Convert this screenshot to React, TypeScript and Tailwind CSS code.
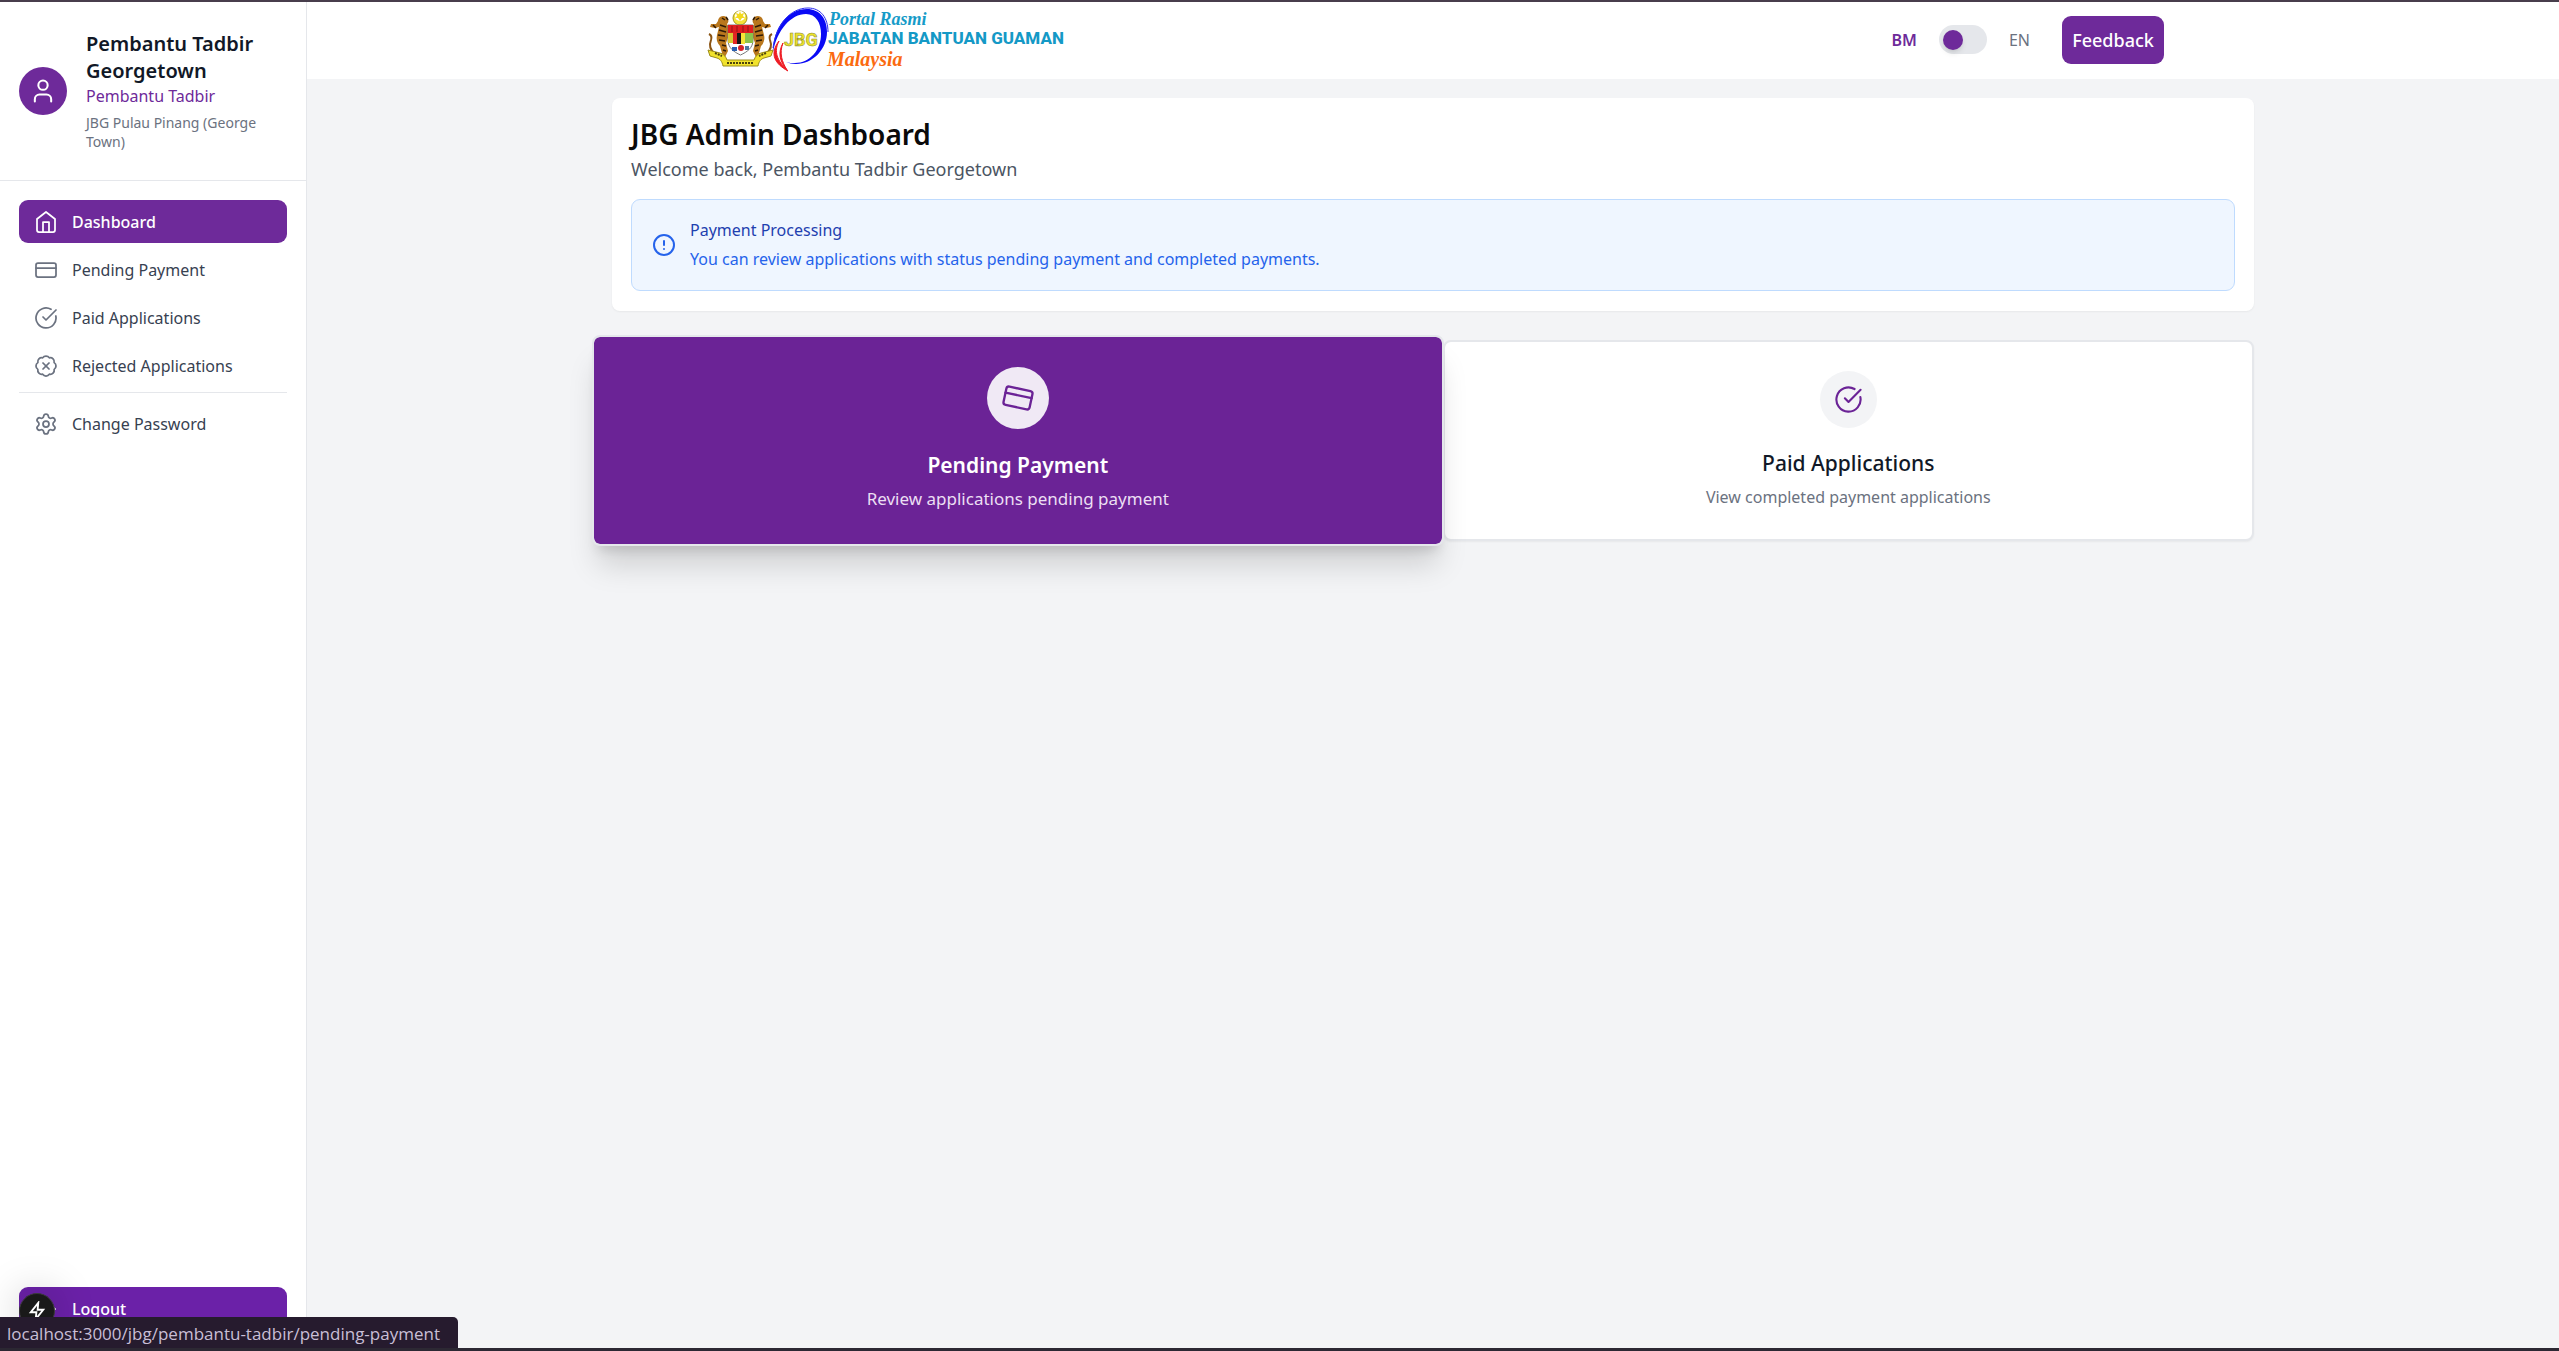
import {
  BadgeX,
  CircleAlert,
  CircleCheckBig,
  CreditCard,
  LogOut,
  Settings,
  User,
  type LucideIcon,
} from "lucide-react";
import { clsx } from "clsx";

interface NavItem {
  label: string;
  href: string;
  icon: LucideIcon | typeof HomeIcon;
  active?: boolean;
}

const NAV_ITEMS: NavItem[] = [
  { label: "Dashboard", href: "#dashboard", icon: HomeIcon, active: true },
  { label: "Pending Payment", href: "#pending-payment", icon: CreditCard },
  { label: "Paid Applications", href: "#paid", icon: CircleCheckBig },
  { label: "Rejected Applications", href: "#rejected", icon: BadgeX },
];

function HomeIcon({ className, strokeWidth = 2 }: { className?: string; strokeWidth?: number | string }) {
  return (
    <svg
      viewBox="0 0 24 24"
      fill="none"
      stroke="currentColor"
      strokeWidth={strokeWidth}
      strokeLinecap="round"
      strokeLinejoin="round"
      className={className}
    >
      <path d="m3 9 9-7 9 7v11a2 2 0 0 1-2 2H5a2 2 0 0 1-2-2z" />
      <path d="M9 22V12h6v10" />
    </svg>
  );
}

function Tiger() {
  return (
    <g>
      <path
        d="M13 4c3-2 7-1 8 2 1 2 0 4-1 5 2 3 3 7 2 11l-3 8 2 8-3 6-7 1 1-3 3-2-2-7c-3-3-4-7-3-11l2-8-4 1-5-1 1-3 5 0 2-3c0-2 1-3 2-4z"
        fill="#b9771d"
      />
      <path
        d="M15 5l3 2M13 12l6 2M12 17l7 2M11 22l7 1M12 27l6 1M15 32l4 1M16 37l3 1M6 12l3 3M19 4l2 3"
        stroke="#2d1a08"
        strokeWidth="1.5"
        fill="none"
      />
      <path d="M8 41c-5-4-6-9-4-14 1-3 0-5-2-6" stroke="#8a5312" strokeWidth="2" fill="none" />
    </g>
  );
}

function Crest() {
  return (
    <g>
      <circle cx="33" cy="9" r="7" fill="#f3e23a" stroke="#a5961c" strokeWidth="1" />
      <circle cx="33" cy="7" r="5" fill="#fff" />
      <path d="m33 2 1 3 3-1-1 3 2 2-3 0-2 3-2-3-3 0 2-2-1-3 3 1z" fill="#f3d91c" />
      <g transform="translate(67 4) scale(-1 1)">
        <Tiger />
      </g>
      <g transform="translate(0 4)">
        <Tiger />
      </g>
      <path d="M21 16h25v15c0 8-6 12-12.500 15C27 43 21 39 21 31z" fill="#fff" stroke="#777" strokeWidth="1" />
      <path d="M21 16h25v8H21z" fill="#df1e20" />
      <path d="M25 17v6M30 17v6M36 17v6M41 17v6" stroke="#8f1518" strokeWidth="1" />
      <path d="M21 24h5v10h-5z" fill="#d8c832" />
      <path d="M26 24h4v11h-4z" fill="#e12724" />
      <path d="M30 24h4v11h-4z" fill="#171717" />
      <path d="M34 24h4v11h-4z" fill="#f6e436" />
      <path d="M38 24h8v10h-8z" fill="#8bc34a" />
      <path d="M25 38h5v4h-5z" fill="#2b5fae" />
      <circle cx="34" cy="39" r="3" fill="#d5262a" />
      <path d="M38 37h4v4h-4z" fill="#4d7a9f" />
      <path
        d="M1 41l12 3c4 1 6 4 7 7h27c1-3 3-6 7-7l12-3-2 6-7 2c-3 1-5 3-6 8H16c-1-5-3-7-6-8l-7-2z"
        fill="#f1e22c"
        stroke="#9c8d1b"
        strokeWidth="1"
      />
      <path d="M20 54h27M8 44l7 3M59 44l-7 3" stroke="#4b430d" strokeWidth="2" strokeDasharray="2 1" />
    </g>
  );
}

function PortalLogo() {
  return (
    <svg viewBox="0 0 366 70" className="h-[70px] w-[366px]" role="img" aria-label="Jabatan Bantuan Guaman">
      <g transform="translate(5 4)">
        <Crest />
      </g>
      <path
        fillRule="evenodd"
        d="M71 47C71 22 86 4 105 4c12 0 20 9 20 23 0 17-14 32-31 32-4 0-7-1-10-2 3 1 6 1 9 1 15 0 26-13 26-29 0-11-5-20-15-20C89 9 75 25 71 47z"
        fill="#0a0af5"
      />
      <path d="M71 43C74 20 88 3 106 3c13 0 20 10 20 24" stroke="#2b2bf0" strokeWidth="1" fill="none" />
      <path d="M77 36c-4 8-5 17 9 30-13-7-19-17-9-30zM81 38c-4 10-1 19 4 27-8-9-9-18-4-27z" fill="#ee1c24" stroke="#ee1c24" />
      <text
        x="82"
        y="41"
        fontSize="18"
        fontWeight="700"
        fill="#ebe32a"
        stroke="#8c8a35"
        strokeWidth="0.5"
        className="font-['Roboto',sans-serif]"
      >
        JBG
      </text>
      <text
        x="127"
        y="20"
        fontSize="18"
        fontWeight="700"
        fontStyle="italic"
        fill="#169bc8"
        className="font-['Liberation_Serif',serif]"
      >
        Portal Rasmi
      </text>
      <text
        x="126"
        y="39"
        fontSize="17"
        fontWeight="800"
        fill="#1499c6"
        className="font-['Roboto',sans-serif]"
      >
        JABATAN BANTUAN GUAMAN
      </text>
      <text
        x="125"
        y="61"
        fontSize="20"
        fontWeight="700"
        fontStyle="italic"
        fill="#fb6a10"
        className="font-['Liberation_Serif',serif]"
      >
        Malaysia
      </text>
    </svg>
  );
}

function NavLink({ item }: { item: NavItem }) {
  const Icon = item.icon;
  return (
    <a
      href={item.href}
      className={clsx(
        "flex h-[43px] items-center gap-[14px] rounded-[9px] px-[15px] text-base",
        item.active ? "bg-[#6e2a9a] font-medium text-white" : "text-[#374151]",
      )}
    >
      <Icon strokeWidth={1.75} className={clsx("size-6 shrink-0", !item.active && "text-[#6b7280]")} />
      {item.label}
    </a>
  );
}

function Sidebar() {
  return (
    <aside className="flex w-[12%] shrink-0 flex-col border-r border-[#e5e7eb] bg-white">
      <div className="flex items-center gap-[19px] border-b border-[#e5e7eb] px-[19px] pt-7 pb-[29px]">
        <div className="flex size-12 shrink-0 items-center justify-center rounded-full bg-[#6e2a9a] text-white">
          <User strokeWidth={1.75} className="size-7" />
        </div>
        <div className="min-w-0">
          <h2 className="text-xl leading-[27px] font-semibold text-[#111827]">Pembantu Tadbir Georgetown</h2>
          <p className="text-base leading-[25px] text-[#6e2a9a]">Pembantu Tadbir</p>
          <p className="mt-1 text-sm leading-[19px] text-[#6b7280]">JBG Pulau Pinang (George Town)</p>
        </div>
      </div>

      <nav className="flex flex-1 flex-col gap-[5px] p-[19px]">
        {NAV_ITEMS.map((item) => (
          <NavLink key={item.label} item={item} />
        ))}
        <div className="border-t border-[#e5e7eb] pt-[9px]">
          <NavLink item={{ label: "Change Password", href: "#password", icon: Settings }} />
        </div>
      </nav>

      <div className="px-[19px] pb-[18px]">
        <button
          type="button"
          className="flex h-[43px] w-full items-center gap-[14px] rounded-[9px] bg-[#6b21a8] px-[15px] text-base font-medium text-white"
        >
          <LogOut strokeWidth={1.5} className="size-6" />
          Logout
        </button>
      </div>
    </aside>
  );
}

function Header() {
  return (
    <header className="bg-white">
      <div className="mx-auto flex h-[77px] max-w-[1462px] items-center justify-between pb-0.5">
        <a href="#home">
          <PortalLogo />
        </a>
        <div className="flex items-center">
          <label htmlFor="language" className="text-base font-semibold text-[#6e2a9a]">
            BM
          </label>
          <span className="relative mx-[22px] flex h-[29px] w-12">
            <input
              id="language"
              type="checkbox"
              role="switch"
              className="peer w-full cursor-pointer appearance-none rounded-full bg-[#e5e7eb]"
            />
            <span className="pointer-events-none absolute top-[5px] left-1 size-5 rounded-full bg-[#6e2a9a] shadow-md peer-checked:left-6" />
          </span>
          <label htmlFor="language" className="text-base text-[#6b7280]">
            EN
          </label>
          <button
            type="button"
            className="ml-8 h-12 w-[102px] rounded-[9px] bg-[#6e2a9a] text-lg font-medium text-white"
          >
            Feedback
          </button>
        </div>
      </div>
    </header>
  );
}

function StatusBar() {
  return (
    <>
      <div className="absolute bottom-[19px] left-[19px] flex size-9 items-center justify-center rounded-full border border-[#3a3a3a] bg-[#191919] text-white shadow-[0_0_40px_rgba(0,0,0,0.25)]">
        <svg viewBox="0 0 16 16" className="size-5" fill="none" stroke="currentColor" strokeWidth="1.5">
          <path d="M9 1.500 3 9h4.500L7 14.500 13 7H8.500z" />
        </svg>
      </div>
      <div className="absolute bottom-0 left-0 h-[31px] rounded-tr-[5px] bg-[#261b2e] pr-[18px] pl-[7px] font-['Open_Sans',sans-serif] text-[17px] leading-[33px] text-[#c9bfd6]">
        localhost:3000/jbg/pembantu-tadbir/pending-payment
      </div>
    </>
  );
}

export default function App() {
  return (
    <div className="relative flex min-h-screen border-t-2 border-b-3 border-t-[#483e4c] border-b-[#2c2833] bg-[#f3f4f6] font-['Noto_Sans',sans-serif]">
      <Sidebar />

      <div className="min-w-0 flex-1">
        <Header />

        <main className="mx-auto mt-[19px] max-w-[1642px]">
          <section className="rounded-lg bg-white px-[19px] pt-[19px] pb-5 shadow-xs">
            <h1 className="text-[28px] leading-[34px] font-semibold text-[#0a0a0a]">JBG Admin Dashboard</h1>
            <p className="mt-1 text-lg leading-7 text-[#4b5563]">Welcome back, Pembantu Tadbir Georgetown</p>
            <div className="mt-4 flex items-center gap-[14px] rounded-[9px] border border-[#bfdbfe] bg-[#eff6ff] px-5 py-4">
              <CircleAlert strokeWidth={2} className="size-6 shrink-0 text-[#2563eb]" />
              <div className="text-base leading-[29px]">
                <h3 className="text-[#1e40af]">Payment Processing</h3>
                <p className="text-[#2563eb]">
                  You can review applications with status pending payment and completed payments.
                </p>
              </div>
            </div>
          </section>

          <div className="mt-[29px] grid grid-cols-2 gap-[19px]">
            {/* Hovered card grows past its grid cell */}
            <a
              href="#pending-payment"
              className="relative z-10 -mx-5 -my-[5px] flex flex-col items-center rounded-lg border-2 border-[#e5e7eb] bg-[#6b2396] bg-clip-padding pt-[30px] pb-8 shadow-[0_25px_30px_-6px_rgba(0,0,0,0.15),0_10px_12px_-6px_rgba(0,0,0,0.12)]"
            >
              <span className="flex size-[62px] items-center justify-center rounded-full bg-[#f0e9f5] text-[#6b2396]">
                <CreditCard strokeWidth={1.75} className="size-8 rotate-12" />
              </span>
              <h3 className="mt-[21px] text-[21px] leading-[30px] font-semibold text-white">Pending Payment</h3>
              <p className="mt-1.5 text-[17px] leading-[26px] text-[#ebdff3]">Review applications pending payment</p>
            </a>

            <a
              href="#paid"
              className="flex flex-col items-center rounded-lg border-2 border-[#e5e7eb] bg-white pt-[29px] pb-[30px] shadow-xs"
            >
              <span className="flex size-[57px] items-center justify-center rounded-full bg-[#f3f4f6] text-[#6b2396]">
                <CircleCheckBig strokeWidth={1.75} className="size-[29px]" />
              </span>
              <h3 className="mt-[21px] text-[21px] leading-7 font-medium text-[#111827]">Paid Applications</h3>
              <p className="mt-2 text-base leading-6 text-[#6b7280]">View completed payment applications</p>
            </a>
          </div>
        </main>
      </div>

      <StatusBar />
    </div>
  );
}
